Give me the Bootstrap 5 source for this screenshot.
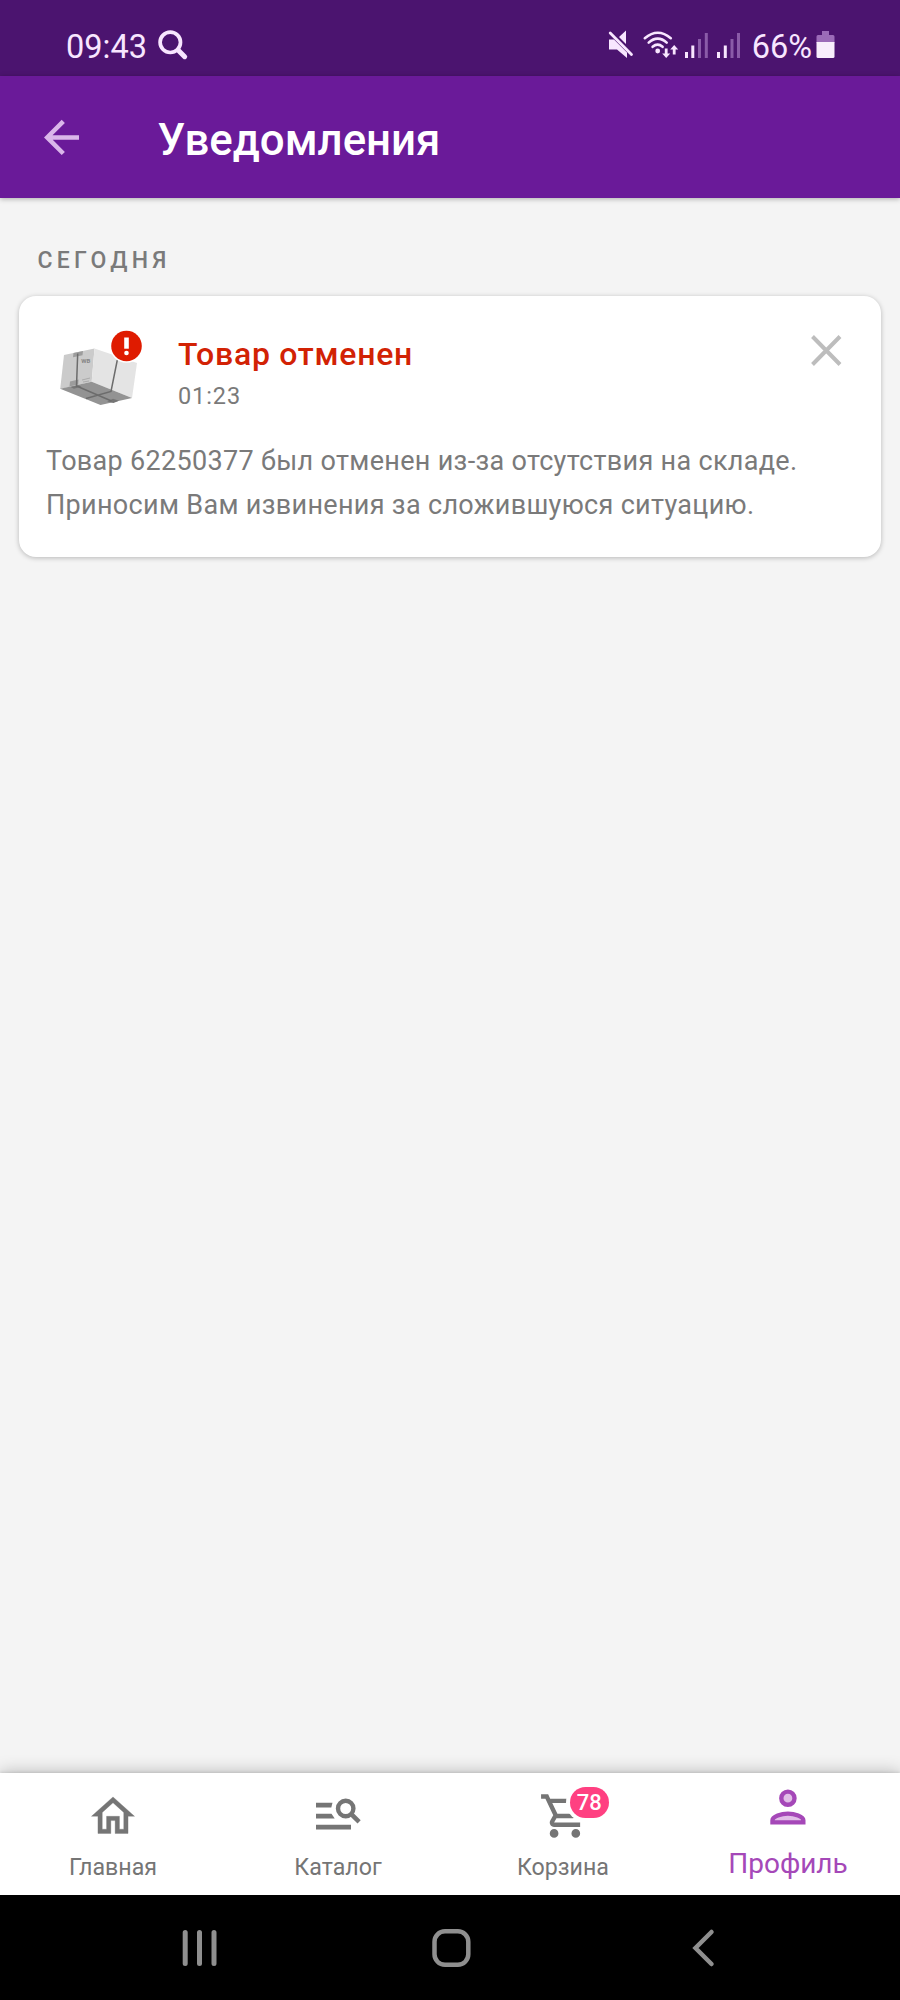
<!DOCTYPE html>
<html lang="ru">
<head>
<meta charset="utf-8">
<meta name="viewport" content="width=device-width, initial-scale=1">
<title>Уведомления</title>
<link href="https://cdn.jsdelivr.net/npm/bootstrap@5.3.0/dist/css/bootstrap.min.css" rel="stylesheet">
<style>
  body { font-family: Roboto, sans-serif; background: #f4f4f4; color: #7a7a7a; height: 2000px; overflow: hidden; }
  svg { display: block; flex: none; overflow: visible; }
  .status-bar { height: 76px; background: #4b146f; color: #f8e6ff; font-size: 32.5px; line-height: 59px; padding: 0 65px 0 66px; }
  .status-bar span { padding-top: 18px; }
  .app-header { height: 122px; background: #6a1a99; box-shadow: 0 1px 5px rgba(0,0,0,.3); }
  .app-header h1 { color: #fff; font-size: 43.8px; font-weight: 500; line-height: 117px; padding-top: 6px; margin-left: 77.5px; }
  .feed { padding: 48px 19px 0; }
  .day-title { font-size: 23px; font-weight: 500; line-height: 30px; letter-spacing: 4.3px; margin: 0 0 20px 18.5px; }
  .notice { border-radius: 17px; height: 261px; background: #fff; box-shadow: 0 1px 5px rgba(0,0,0,.25); padding: 29px 28px 0; }
  .notice h2 { color: #d22204; font-size: 32px; font-weight: 500; line-height: 40px; letter-spacing: .75px; margin: 9px 0 7px; }
  .notice time { font-size: 23.5px; line-height: 30px; letter-spacing: .9px; display: block; }
  .notice p { font-size: 27px; line-height: 44px; letter-spacing: .32px; margin: 28px 0 0 -1px; }
  .tab-bar { height: 122px; background: #fff; box-shadow: 0 -1px 3px rgba(0,0,0,.1), 0 -1px 16px rgba(0,0,0,.24); }
  .tab-bar a { color: #757575; font-size: 23.2px; line-height: 30px; }
  .tab-bar a span { margin: 9px 0 0 1px; }
  .tab-bar a.current { color: #a548b8; font-size: 28px; }
  .tab-bar a.current span { margin-top: 6px; }
  .cart-count { left: 120px; top: 14px; width: 38.5px; height: 31px; border-radius: 16px; background: #ff4081; color: #fff; font-size: 22px; font-weight: 500; line-height: 31px; box-shadow: 0 0 0 4px #fff; }
  .system-nav { height: 105px; background: #000; }
</style>
</head>
<body class="d-flex flex-column">

<div class="status-bar d-flex">
  <span id="clock">09:43</span>
  <svg class="ms-2" width="34" height="76" viewBox="155 0 34 76" fill="none" stroke="#f8e6ff">
    <circle cx="170.3" cy="42.3" r="10.2" stroke-width="3.7"/>
    <path d="M178 50l6.7 6.7" stroke-width="5" stroke-linecap="round"/>
  </svg>
  <div class="d-flex ms-auto">
    <svg width="144" height="76" viewBox="608 0 144 76" fill="#f8e6ff">
      <!-- muted speaker -->
      <path d="M609 39.500h5l13 13V58l-10-8.500h-8zM619 37l7-6.500V44z"/>
      <path d="M611.600 31.600l21.300 21.500" stroke="#4b146f" stroke-width="1.500"/>
      <path d="M610.200 33l21.300 21.500" stroke="#f8e6ff" stroke-width="2.800" stroke-linecap="round"/>
      <!-- wifi -->
      <g fill="none" stroke="#f8e6ff" stroke-width="2.600" stroke-linecap="round">
        <path d="M644.800 38.200q6.500-5.500 13-5.500t13 5.500M648.700 42.600q4.300-4 9-4t9 4M652.600 46.800q5-4.200 10 0"/>
      </g>
      <circle cx="657.700" cy="51" r="2.400"/>
      <path d="M664.800 48.500h2.800v5h2.600l-4 4.400-4-4.400h2.600zM672.800 54.500h2.800v-5h2.600l-4-4.400-4 4.400h2.600z"/>
      <!-- two SIM signal meters -->
      <path d="M685 52h3v6h-3zM691.300 45.500h3v12.500h-3zM717 52h3v6h-3zM723.800 45.500h3v12.500h-3z"/>
      <path fill="#8a5ba8" d="M698 39h3v19h-3zM704.800 33h3v25h-3zM730.500 39h3v19h-3zM737 33h3v25h-3z"/>
    </svg>
    <span id="charge">66%</span>
    <svg class="ms-1" width="19" height="76" viewBox="816 0 19 76">
      <path fill="#9b6bb8" d="M822 31h7v4h4q1.500 0 1.500 1.500V43h-18v-6.500q0-1.500 1.500-1.500h4z"/>
      <path fill="#f8eefc" d="M816.500 42h18v14.500q0 1.500-1.500 1.500h-15q-1.500 0-1.500-1.500z"/>
    </svg>
  </div>
</div>

<header class="app-header d-flex">
  <svg width="80" height="122" viewBox="0 76 80 122" fill="none" stroke="#dab6ea" stroke-width="4.500">
    <path d="M79 137.400H47M63.300 121.400L47.200 137.400l16.100 16.100"/>
  </svg>
  <h1 class="mb-0">Уведомления</h1>
</header>

<main class="feed flex-grow-1">
  <div class="day-title">СЕГОДНЯ</div>
  <article class="notice">
    <div class="d-flex">
      <svg class="me-auto" width="131" height="85" viewBox="47 325 131 85">
        <path fill="#cbcbcb" d="M64 355l30.500-6.500-2.800 33.300L60.200 389z"/>
        <path fill="#e4e4e4" d="M94.500 348.500L137 363l-5 35-40.300-16.200z"/>
        <path fill="#939393" d="M60.200 388.700l31.500-7L132 398l-31.500 7z"/>
        <path fill="#9c9c9c" d="M73.500 353l9.500-2-.5 4.300-9.500 2zM70 381.500l8.500-2-.3 5-8.700 2z"/>
        <path fill="#757575" d="M107 401.500l6-2.700 6 2-5.500 2.200zM70.500 387l8-1.800 3 1.300-7.500 2.200z"/>
        <path fill="none" stroke="#6c6c6c" stroke-width="1.500" d="M77.700 353.500l-1.200 32.500 35 15M117.300 360L111 391.500 86 398.500"/>
        <path fill="none" stroke="#a2a2a2" stroke-width=".8" d="M82 380l8-2M83 382l6-1"/>
        <text x="81.300" y="363" font-size="6" font-weight="700" fill="#858585" textLength="9">WB</text>
        <circle cx="126.500" cy="346" r="16.800" fill="#fff"/>
        <circle cx="126.500" cy="346" r="15.300" fill="#df1b00"/>
        <path fill="none" stroke="#fff" stroke-width="4.600" stroke-linejoin="round" d="M126.500 337.500v11.200"/>
        <circle cx="126.500" cy="353" r="2.300" fill="#fff"/>
      </svg>
      <div class="flex-grow-1">
        <h2>Товар отменен</h2>
        <time>01:23</time>
      </div>
      <svg role="button" aria-label="Закрыть" width="42" height="50" viewBox="811 325 42 50" fill="none" stroke="#bdbdbd" stroke-width="4">
        <path d="M812.500 336.500l27.500 28M840 336.500l-27.500 28"/>
      </svg>
    </div>
    <p>Товар 62250377 был отменен из-за отсутствия на складе.<br>Приносим Вам извинения за сложившуюся ситуацию.</p>
  </article>
</main>

<nav class="tab-bar d-flex text-center">
  <a class="col-3 d-flex flex-column align-items-center text-decoration-none">
    <svg width="225" height="70" viewBox="0 1773 225 70" fill="#757575">
      <path transform="translate(87.2 1790.5) scale(2.15)" stroke="#757575" stroke-width=".15" d="M12 5.690l5 4.500V18h-2v-6H9v6H7v-7.810l5-4.500M12 3L2 12h3v8h6v-6h2v6h6v-8h3z"/>
    </svg>
    <span>Главная</span>
  </a>
  <a class="col-3 d-flex flex-column align-items-center text-decoration-none">
    <svg width="225" height="70" viewBox="225 1773 225 70" fill="#757575">
      <path d="M316 1802.700h16.500l-1.200 4.800H316zM316 1813.700h15.500l3.200 4.800H316zM316 1824.700h35v4.800h-35z"/>
      <g fill="none" stroke="#757575"><circle cx="345.700" cy="1808.500" r="7.700" stroke-width="4.400"/><path d="M351.300 1814.200l7.800 7.700" stroke-width="4.600"/></g>
    </svg>
    <span>Каталог</span>
  </a>
  <a class="col-3 d-flex flex-column align-items-center text-decoration-none position-relative">
    <svg width="225" height="70" viewBox="450 1773 225 70" fill="#757575">
      <path transform="translate(538.9 1790) scale(2.17)" d="M15.550 13c.75 0 1.410-.41 1.750-1.030l3.580-6.490A.996.996 0 0 0 20.010 4H5.210l-.94-2H1v2h2l3.600 7.590-1.350 2.440C4.520 15.370 5.480 17 7 17h12v-2H7l1.100-2h7.450zM6.160 6h12.150l-2.760 5H8.530zM7 18a2 2 0 1 0 0 4 2 2 0 0 0 0-4zM17 18a2 2 0 1 0 0 4 2 2 0 0 0 0-4z"/>
    </svg>
    <b class="cart-count position-absolute">78</b>
    <span>Корзина</span>
  </a>
  <a class="col-3 current d-flex flex-column align-items-center text-decoration-none">
    <svg width="225" height="70" viewBox="675 1773 225 70">
      <g transform="translate(761.500 1780.600) scale(2.2)" fill="#e1bee7" stroke="#a548b8" stroke-width="2">
        <circle cx="12" cy="8" r="3"/>
        <path d="M5 19v-1c0-1.700 4-3 7-3s7 1.300 7 3v1z"/>
      </g>
    </svg>
    <span>Профиль</span>
  </a>
</nav>

<div class="system-nav d-flex">
  <svg width="900" height="105" viewBox="0 1895 900 105" fill="none" stroke="#8f8f8f" stroke-width="5" stroke-linecap="round">
    <path d="M185.200 1932.500v31M199.500 1932.500v31M214 1932.500v31"/>
    <rect x="434.500" y="1931.300" width="33.800" height="33.500" rx="10.500" stroke-width="4.500"/>
    <path d="M711.500 1932l-16 16 16 16" stroke-width="4.500"/>
  </svg>
</div>

<script src="https://cdn.jsdelivr.net/npm/bootstrap@5.3.0/dist/js/bootstrap.bundle.min.js"></script>
</body>
</html>
